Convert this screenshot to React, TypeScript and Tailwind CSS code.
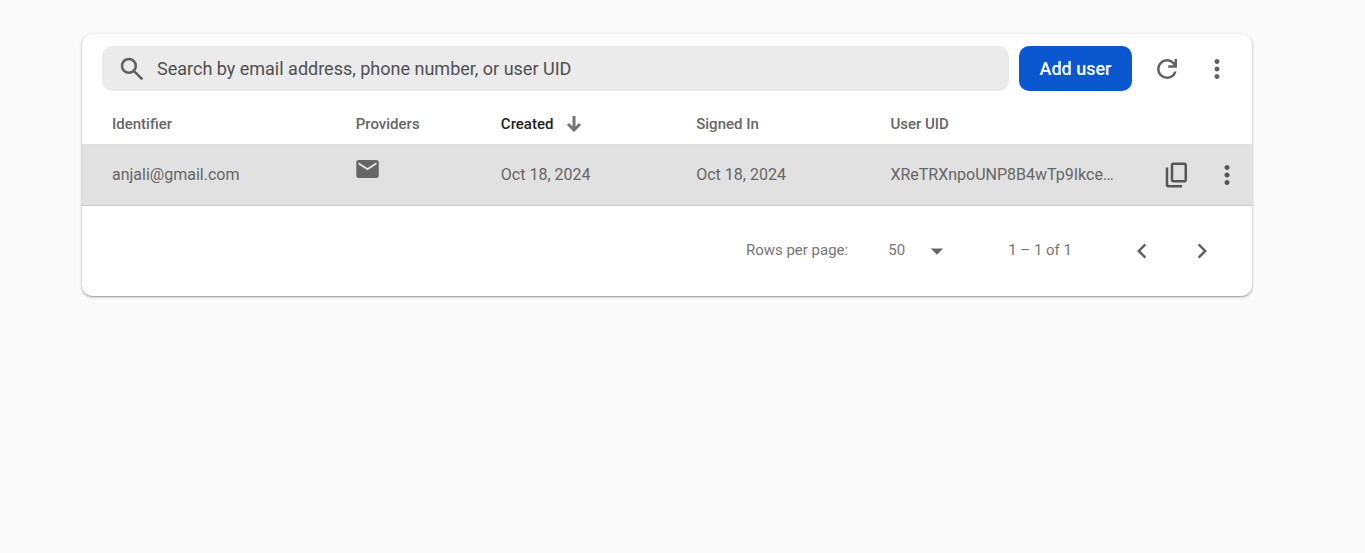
import React from "react";
import { MdArrowDropDown, MdChevronLeft, MdChevronRight, MdMoreVert } from "react-icons/md";

type User = {
  identifier: string;
  created: string;
  signedIn: string;
  uid: string;
};

const users: User[] = [
  {
    identifier: "anjali@gmail.com",
    created: "Oct 18, 2024",
    signedIn: "Oct 18, 2024",
    uid: "XReTRXnpoUNP8B4wTp9Ikce…",
  },
];

const symbols = {
  search:
    "M784-120 532-372q-30 24-69 38t-83 14q-109 0-184.5-75.5T120-580q0-109 75.5-184.5T380-840q109 0 184.5 75.5T640-580q0 44-14 83t-38 69l252 252-56 56ZM380-400q75 0 127.5-52.5T560-580q0-75-52.5-127.5T380-760q-75 0-127.5 52.5T200-580q0 75 52.5 127.5T380-400Z",
  refresh:
    "M480-160q-134 0-227-93t-93-227q0-134 93-227t227-93q69 0 132 28.5T720-690v-110h80v280H520v-80h168q-32-56-87.5-88T480-720q-100 0-170 70t-70 170q0 100 70 170t170 70q77 0 139-44t87-116h84q-28 106-114 173t-196 67Z",
  copy: "M360-240q-33 0-56.5-23.5T280-320v-480q0-33 23.5-56.5T360-880h360q33 0 56.5 23.5T800-800v480q0 33-23.5 56.5T720-240H360Zm0-80h360v-480H360v480ZM200-80q-33 0-56.5-23.5T120-160v-560h80v560h440v80H200Z",
};

function SymbolIcon({ name }: { name: keyof typeof symbols }) {
  return (
    <svg viewBox="0 -960 960 960" className="size-[30px] shrink-0" fill="currentColor" aria-hidden="true">
      <path d={symbols[name]} />
    </svg>
  );
}

function IconButton({ label, children }: { label: string; children: React.ReactNode }) {
  return (
    <button type="button" aria-label={label} className="flex size-[50px] items-center justify-center">
      {children}
    </button>
  );
}

function MailIcon() {
  return (
    <svg viewBox="2 4 20 16" className="block h-[18px] w-[23px]" fill="currentColor" role="img" aria-label="Email">
      <path d="M20 4H4c-1.1 0-1.99.9-1.99 2L2 18c0 1.1.9 2 2 2h16c1.1 0 2-.9 2-2V6c0-1.1-.9-2-2-2zm0 4l-8 5-8-5V6l8 5 8-5v2z" />
    </svg>
  );
}

function SortArrow() {
  return (
    <svg viewBox="0 0 16 16" className="size-4" fill="none" stroke="#757575" strokeWidth="3" aria-hidden="true">
      <path d="M8 0v14M2 8l6 6 6-6" />
    </svg>
  );
}

function Toolbar() {
  return (
    <div className="flex items-center pt-3 pr-[10px] pl-5">
      <label className="flex h-[45px] flex-1 items-center gap-[10px] rounded-[10px] bg-[#ebebeb] pl-[15px] text-[#616161]">
        <SymbolIcon name="search" />
        <input
          type="text"
          aria-label="Search users"
          placeholder="Search by email address, phone number, or user UID"
          className="min-w-0 flex-1 bg-transparent text-lg outline-none placeholder:text-[#505050]"
        />
      </label>
      <button type="button" className="ml-[10px] h-[45px] w-[113px] rounded-[10px] bg-[#0b57d0] text-lg font-medium text-white">
        Add user
      </button>
      <div className="-my-1 ml-[10px] flex text-[#616161]">
        <IconButton label="Refresh">
          <SymbolIcon name="refresh" />
        </IconButton>
        <IconButton label="More options">
          <MdMoreVert className="size-[30px]" />
        </IconButton>
      </div>
    </div>
  );
}

function UserTable() {
  return (
    <table className="w-full table-fixed border-collapse text-left text-[#666666]">
      <thead>
        <tr className="h-[53px] border-b border-[#e0e0e0] text-[15px] [&>th]:pt-[14px] [&>th]:font-medium">
          <th scope="col" className="w-[23.4%] pl-[30px]">Identifier</th>
          <th scope="col" className="w-[12.4%]">Providers</th>
          <th scope="col" className="w-[16.7%]" aria-sort="descending">
            <button type="button" className="flex items-center gap-[13px] font-medium text-[#212121]">
              Created
              <SortArrow />
            </button>
          </th>
          <th scope="col" className="w-[16.6%]">Signed In</th>
          <th scope="col">User UID</th>
        </tr>
      </thead>
      <tbody>
        {users.map((user) => (
          <tr key={user.uid} className="h-[61px] border-b border-[#c8cace] bg-[#e1e1e1] text-base">
            <td className="pl-[30px]">{user.identifier}</td>
            <td className="pb-3 text-[#666666]">
              <MailIcon />
            </td>
            <td>{user.created}</td>
            <td>{user.signedIn}</td>
            <td>
              <div className="flex items-center">
                <span className="min-w-0 flex-1 truncate">{user.uid}</span>
                <div className="flex text-[#555555]">
                  <IconButton label="Copy UID">
                    <SymbolIcon name="copy" />
                  </IconButton>
                  <IconButton label="User actions">
                    <MdMoreVert className="size-[30px]" />
                  </IconButton>
                </div>
              </div>
            </td>
          </tr>
        ))}
      </tbody>
    </table>
  );
}

function Paginator() {
  return (
    <div className="flex h-[90px] items-center justify-end pr-[25px] text-[15px] text-[#757575]">
      <label htmlFor="page-size">Rows per page:</label>
      <div className="ml-10 grid w-16 items-center">
        <select id="page-size" defaultValue="50" className="col-start-1 row-start-1 appearance-none bg-transparent outline-none">
          <option>50</option>
          <option>100</option>
          <option>250</option>
        </select>
        <MdArrowDropDown className="pointer-events-none col-start-1 row-start-1 size-[30px] justify-self-end text-[#666666]" />
      </div>
      <span className="ml-14">1 – 1 of 1</span>
      <div className="ml-[45px] flex gap-[10px] text-[#616161]">
        <IconButton label="Previous page">
          <MdChevronLeft className="size-[30px]" />
        </IconButton>
        <IconButton label="Next page">
          <MdChevronRight className="size-[30px]" />
        </IconButton>
      </div>
    </div>
  );
}

export default function App() {
  return (
    <div className="min-h-screen bg-[#fafafa] pt-[34px] pr-[113px] pl-[82px] font-['Roboto',sans-serif]">
      <main className="overflow-hidden rounded-[10px] bg-white shadow-[0_1px_3px_rgba(0,0,0,0.3),0_1px_1px_rgba(0,0,0,0.15)]">
        <Toolbar />
        <UserTable />
        <Paginator />
      </main>
    </div>
  );
}
